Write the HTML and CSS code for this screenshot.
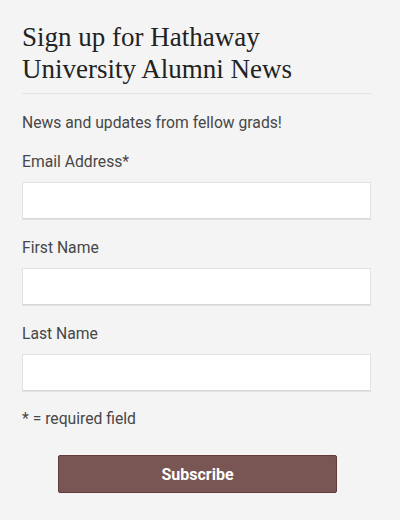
FILE: index.html
```html
<!DOCTYPE html>
<html lang="en">
<head>
<meta charset="utf-8">
<link rel="stylesheet" href="styles.css">
</head>
<body>
<div class="signup">
  <h1 class="title">Sign up for Hathaway University Alumni News</h1>
  <p class="intro">News and updates from fellow grads!</p>
  <form class="form">
    <label class="field">
      <span class="label">Email Address*</span>
      <input class="input" type="email">
    </label>
    <label class="field">
      <span class="label">First Name</span>
      <input class="input" type="text">
    </label>
    <label class="field">
      <span class="label">Last Name</span>
      <input class="input" type="text">
    </label>
    <p class="note">* = required field</p>
    <div class="actions">
      <button class="button" type="button">Subscribe</button>
    </div>
  </form>
</div>
</body>
</html>
```

FILE: styles.css
```css
html, body {
  margin: 0;
  padding: 0;
  background: #f4f4f4;
}
.signup {
  padding: 21px 29px 0 22px;
  font-family: Roboto, "Liberation Sans", sans-serif;
  color: #474747;
}
.title {
  margin: 0;
  font-family: "Liberation Serif", "DejaVu Serif", serif;
  font-weight: normal;
  font-size: 27px;
  line-height: 32px;
  color: #222;
  padding: 0 70px 8px 0;
  border-bottom: 1px solid #e3e3e3;
}
.intro {
  margin: 0;
  padding-top: 19px;
  font-size: 15.7px;
  line-height: 20px;
}
.form {
  margin: 0;
}
.field {
  display: flex;
  flex-direction: column;
  padding-top: 19px;
}
.label {
  font-size: 15.7px;
  line-height: 20px;
}
.input {
  margin-top: 10px;
  height: 37px;
  box-sizing: border-box;
  border: 1px solid #e2e2e2;
  border-bottom-color: #d6d6d6;
  box-shadow: 0 1px 0 #e4e4e4;
  background: #fff;
  padding: 0 8px;
  font: inherit;
}
.note {
  margin: 0;
  padding-top: 18px;
  font-size: 15.7px;
  line-height: 20px;
}
.actions {
  display: flex;
  padding-top: 26px;
  padding-left: 36px;
}
.button {
  width: 279px;
  height: 38px;
  background: #795553;
  border: 1px solid #5f3b3b;
  border-radius: 2px;
  color: #fff;
  font-family: Roboto, "Liberation Sans", sans-serif;
  font-weight: bold;
  font-size: 16px;
  cursor: pointer;
}
```
